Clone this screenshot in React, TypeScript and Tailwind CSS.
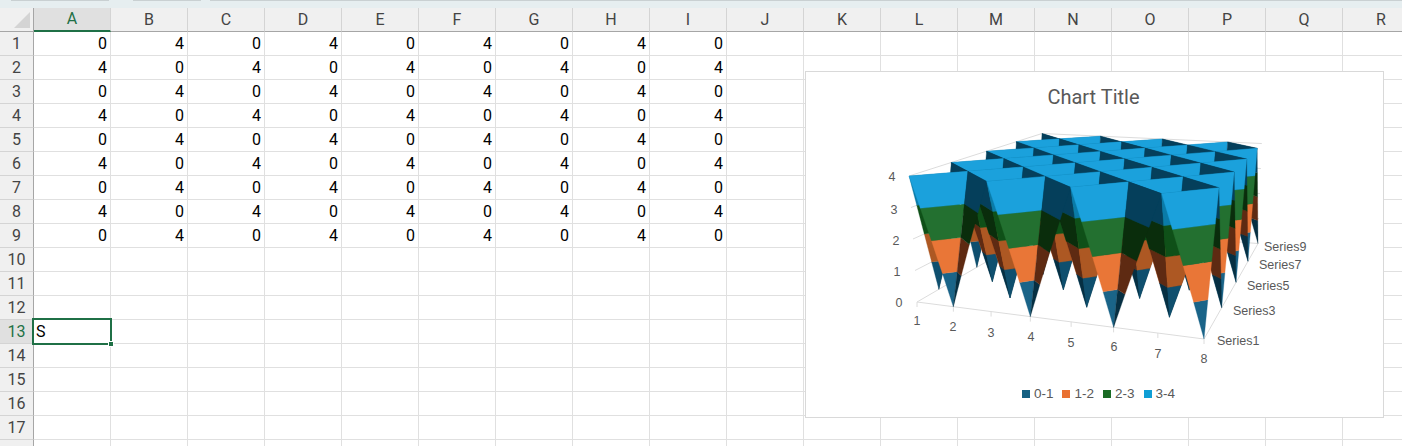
import React from "react";

type Pt = [number, number];

const columns = ["A", "B", "C", "D", "E", "F", "G", "H", "I", "J", "K", "L", "M", "N", "O", "P", "Q", "R"];
const rows = Array.from({ length: 18 }, (_, i) => i + 1);

// perspective shared by the floor and the top of the box
const G = -0.13;
const H = 0.4;

// origin, end of the category axis, end of the series axis
const planeMap = ([x0, y0]: Pt, [x1, y1]: Pt, [x3, y3]: Pt) => {
  const a = x1 * (1 + G) - x0;
  const b = x3 * (1 + H) - x0;
  const d = y1 * (1 + G) - y0;
  const e = y3 * (1 + H) - y0;
  return (u: number, v: number): Pt => {
    const w = G * u + H * v + 1;
    return [(a * u + b * v + x0) / w, (d * u + e * v + y0) / w];
  };
};

const floorMap = planeMap([917, 302], [1204, 339], [1048, 226]);
const ceilingMap = planeMap([909, 176], [1210, 197], [1042, 133.5]);

type V = { i: number; j: number; z: number };

const project = ({ i, j, z }: V): Pt => {
  const p = floorMap(i / 7, j / 8);
  const q = ceilingMap(i / 7, j / 8);
  const t = z / 4;
  return [p[0] + (q[0] - p[0]) * t, p[1] + (q[1] - p[1]) * t];
};

const height = (i: number, j: number) => ((i + j) % 2 === 0 ? 4 : 0);
const vert = (i: number, j: number): V => ({ i, j, z: height(i, j) });

const clip = (poly: V[], level: number, keepAbove: boolean) => {
  const out: V[] = [];
  poly.forEach((a, n) => {
    const b = poly[(n + 1) % poly.length];
    const inA = keepAbove ? a.z >= level : a.z <= level;
    const inB = keepAbove ? b.z >= level : b.z <= level;
    if (inA) out.push(a);
    if (inA !== inB) {
      const t = (level - a.z) / (b.z - a.z);
      out.push({ i: a.i + (b.i - a.i) * t, j: a.j + (b.j - a.j) * t, z: level });
    }
  });
  return out;
};

const shades = {
  bright: ["#1a6488", "#e97637", "#237030", "#1ba1dc"],
  medium: ["#0f4f6e", "#ad5823", "#0f5018", "#0a7ba8"],
  dark: ["#062f42", "#5e2a12", "#0a2d0c", "#053f5b"],
};

const facets: { points: string; fill: string }[] = [];

const addFacet = (tri: V[], shade: string[]) => {
  for (let band = 0; band < 4; band++) {
    const poly = clip(clip(tri, band, true), band + 1, false);
    if (poly.length < 3) continue;
    facets.push({
      points: poly.map((v) => project(v).map((n) => n.toFixed(2)).join(",")).join(" "),
      fill: shade[band],
    });
  }
};

// back row first so nearer facets paint over it
for (let j = 7; j >= 0; j--) {
  for (let i = 0; i < 7; i++) {
    if ((i + j) % 2 === 0) {
      addFacet([vert(i, j), vert(i, j + 1), vert(i + 1, j + 1)], shades.medium);
      addFacet([vert(i, j), vert(i + 1, j), vert(i + 1, j + 1)], shades.bright);
    } else {
      addFacet([vert(i + 1, j), vert(i + 1, j + 1), vert(i, j + 1)], shades.dark);
      addFacet([vert(i, j), vert(i + 1, j), vert(i, j + 1)], shades.dark);
    }
  }
}

const line = (a: V, b: V) => {
  const p = project(a);
  const q = project(b);
  return { x1: p[0], y1: p[1], x2: q[0], y2: q[1] };
};

const zTicks: [string, number, number][] = [["4", 892, 181], ["3", 894, 214], ["2", 896, 245], ["1", 897, 276], ["0", 899, 307]];
const xTicks: [string, number, number][] = [
  ["1", 917, 325], ["2", 953, 331], ["3", 991, 337], ["4", 1031, 341],
  ["5", 1071, 347], ["6", 1114, 351], ["7", 1158, 358], ["8", 1204, 363],
];
const seriesTicks: [string, number, number][] = [["Series1", 1217, 345], ["Series3", 1233, 315], ["Series5", 1247, 290], ["Series7", 1259, 269], ["Series9", 1264, 251]];

const legend = [
  { label: "0-1", swatch: "bg-[#156082]" },
  { label: "1-2", swatch: "bg-[#e97132]" },
  { label: "2-3", swatch: "bg-[#196b24]" },
  { label: "3-4", swatch: "bg-[#0f9ed5]" },
];

const SurfaceChart = () => (
  <div className="absolute left-[805px] top-[71px] flex h-[347px] w-[579px] flex-col border border-[#d9d9d9] bg-white">
    <div className="flex h-[43px] items-end justify-center pr-[2px] text-[20px] leading-[36px] text-[#595959] [font-family:Roboto,sans-serif]">
      Chart Title
    </div>
    <svg viewBox="806 115 577 260" className="h-[260px] w-[577px] [font-family:'Liberation_Sans',sans-serif]">
      <g stroke="#dcdcdc" strokeWidth="1">
        {[0, 1, 2, 3, 4].map((z) => (
          <React.Fragment key={z}>
            <line {...line({ i: 0, j: 0, z }, { i: 0, j: 8, z })} />
            <line {...line({ i: 0, j: 8, z }, { i: 7, j: 8, z })} />
          </React.Fragment>
        ))}
        <line {...line({ i: 0, j: 0, z: 0 }, { i: 7, j: 0, z: 0 })} />
        <line {...line({ i: 7, j: 0, z: 0 }, { i: 7, j: 8, z: 0 })} />
        {[0, 1, 2, 3, 4, 5, 6, 7].map((i) => {
          const p = project({ i, j: 0, z: 0 });
          return <line key={i} x1={p[0]} y1={p[1]} x2={p[0]} y2={p[1] + 5} />;
        })}
      </g>
      {facets.map((f, n) => (
        <polygon key={n} points={f.points} fill={f.fill} stroke={f.fill} strokeWidth="0.3" />
      ))}
      <g fill="#595959" fontSize="12.5">
        {zTicks.map(([t, x, y]) => <text key={t} x={x} y={y} textAnchor="middle">{t}</text>)}
        {xTicks.map(([t, x, y]) => <text key={t} x={x} y={y} textAnchor="middle">{t}</text>)}
        {seriesTicks.map(([t, x, y]) => <text key={t} x={x} y={y}>{t}</text>)}
      </g>
    </svg>
    <div className="flex flex-1 items-start justify-center gap-[9px] pl-[8px] pt-[11px] text-[13.5px] leading-[16px] text-[#595959] [font-family:'Liberation_Sans',sans-serif]">
      {legend.map((l) => (
        <div key={l.label} className="flex items-center gap-[4px]">
          <span className={`h-[8px] w-[8px] ${l.swatch}`} />
          <span>{l.label}</span>
        </div>
      ))}
    </div>
  </div>
);

const App: React.FC = () => {
  return (
    <div className="relative h-[446px] w-[1402px] overflow-hidden bg-white text-[16px] [font-family:Roboto,sans-serif]">
      <div className="flex h-[8px] items-start bg-[#e6eef0]">
        <div className="ml-[11px] h-[1px] w-[98px] bg-[#c9d0d2]" />
        <div className="ml-[24px] h-[1px] w-[68px] bg-[#c9d0d2]" />
        <div className="ml-[9px] h-[1px] flex-1 bg-[#c9d0d2]" />
      </div>
      <div className="flex h-[24px] bg-[#f0f0f0] text-[#444444]">
        <div className="relative h-[24px] w-[34px] shrink-0 border-b border-r border-[#a6a6a6]">
          <div className="absolute bottom-[3px] right-[3px] h-0 w-0 border-b-[16px] border-l-[16px] border-b-[#d4d4d4] border-l-transparent" />
        </div>
        {columns.map((c) => (
          <div
            key={c}
            className={
              c === "A"
                ? "flex w-[77px] shrink-0 items-center justify-center border-b-2 border-r border-b-[#1f7046] border-r-[#d4d4d4] bg-[#e0e0e0] text-[#1f7046]"
                : "flex w-[77px] shrink-0 items-center justify-center border-b border-r border-b-[#a6a6a6] border-r-[#d4d4d4]"
            }
          >
            {c}
          </div>
        ))}
      </div>
      {rows.map((r) => (
        <div key={r} className="flex h-[24px]">
          <div
            className={
              r === 13
                ? "flex w-[34px] shrink-0 items-center justify-center border-b border-r border-b-[#d4d4d4] border-r-[#a6a6a6] bg-[#e0e0e0] pt-[1px] text-[#1f7046]"
                : "flex w-[34px] shrink-0 items-center justify-center border-b border-r border-b-[#d4d4d4] border-r-[#a6a6a6] bg-[#f0f0f0] pt-[1px] text-[#444444]"
            }
          >
            {r < 18 ? r : null}
          </div>
          {columns.map((c, n) => (
            <div
              key={c}
              className="relative flex w-[77px] shrink-0 items-center justify-end border-b border-r border-[#e0e0e0] pr-[3px] pt-[1px] text-black"
            >
              {r <= 9 && n < 9 ? ((r - 1 + n) % 2 === 0 ? 0 : 4) : null}
              {r === 13 && n === 0 && (
                <div className="absolute -left-[2px] -top-[2px] z-10 flex h-[27px] w-[80px] items-center border-2 border-[#1f7046] pl-[2px]">
                  S
                  <span className="absolute -bottom-[4px] -right-[4px] h-[6px] w-[6px] border border-white bg-[#1f7046]" />
                </div>
              )}
            </div>
          ))}
        </div>
      ))}
      <SurfaceChart />
    </div>
  );
};

export default App;
